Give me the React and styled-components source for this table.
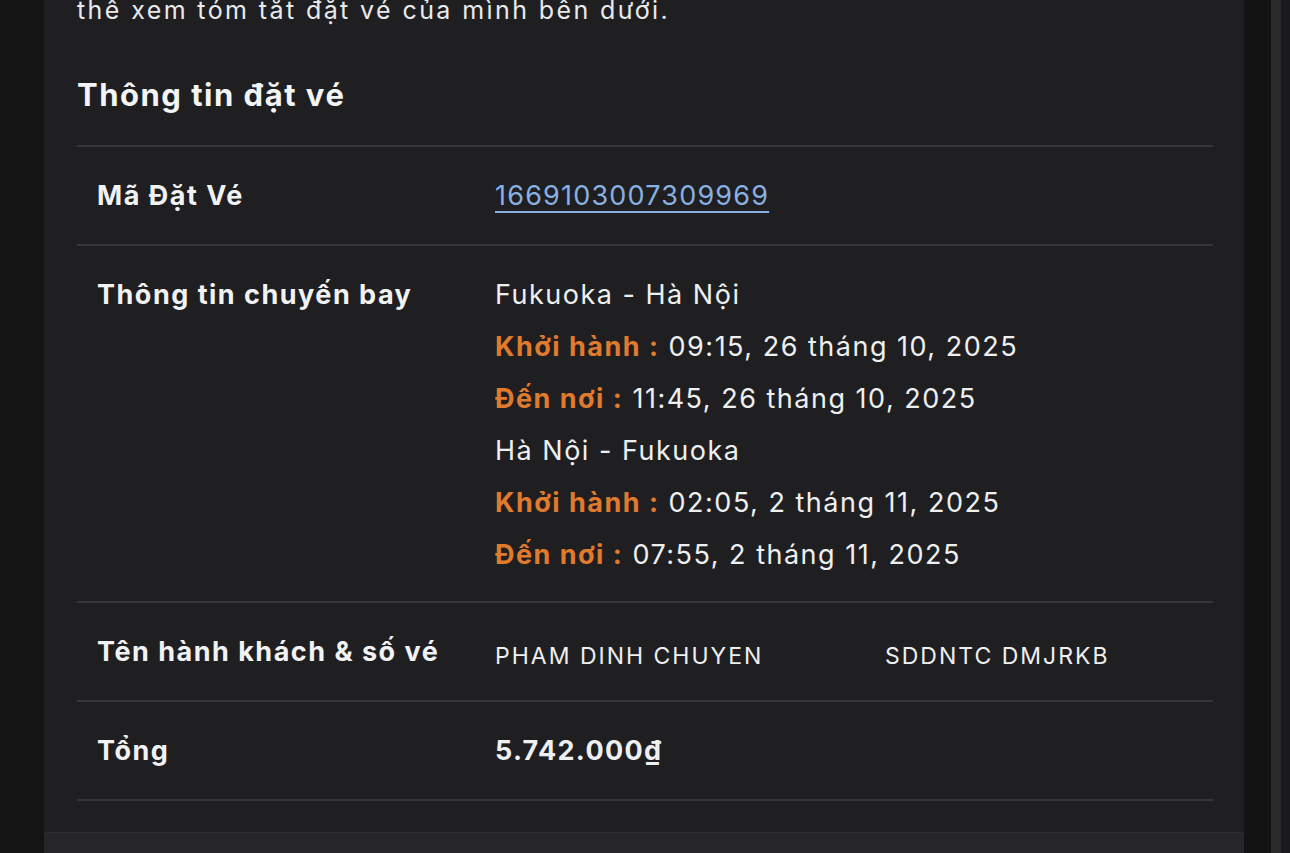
import React from "react";
import styled, { createGlobalStyle } from "styled-components";

const GlobalStyle = createGlobalStyle`
  html, body {
    margin: 0;
    padding: 0;
    background: #131313;
    height: 100%;
    overflow: hidden;
  }
  body {
    font-family: Inter, "Noto Sans", "Liberation Sans", sans-serif;
    color: #f1f2f4;
  }
`;

const Page = styled('div')`
  display: flex;
  height: 853px;
  overflow: hidden;
`;

const Gutter = styled('div')`
  flex: 0 0 ${p => p.w}px;
  background: ${p => p.bg || '#131313'};
`;

const Card = styled('div')`
  flex: 0 0 1200px;
  background: #1f1f22;
  display: flex;
  flex-direction: column;
`;

const Body = styled('div')`
  padding: 0 31px 0 33px;
  flex: 1;
`;

const Intro = styled('p')`
  margin: -5px 0 0;
  font-size: 25px;
  line-height: 30px;
  letter-spacing: 2.4px;
  color: #e9eaec;
`;

const Heading = styled('h2')`
  margin: 52px 0 0;
  font-size: 31px;
  line-height: 36px;
  font-weight: 700;
  letter-spacing: 1.5px;
  color: #f3f4f6;
`;

const Table = styled('div')`
  margin-top: 32px;
  border-bottom: 2px solid #34373b;
`;

const Row = styled('div')`
  display: grid;
  grid-template-columns: 398px 1fr;
  border-top: 2px solid #34373b;
  padding: 23px 0 ${p => (p.tight ? 20 : 22)}px;
`;

const Label = styled('div')`
  padding-left: 20px;
  font-size: 27px;
  line-height: 52px;
  font-weight: 700;
  letter-spacing: 1.5px;
  color: #f1f2f4;
`;

const Value = styled('div')`
  padding-left: 20px;
  font-size: 27px;
  line-height: 52px;
  letter-spacing: 1.5px;
  color: #eeeff1;
`;

const Line = styled('div')``;

const Code = styled('a')`
  color: #88b0e2;
  letter-spacing: 1.2px;
  text-decoration: underline;
  text-underline-offset: 6px;
  text-decoration-thickness: 2px;
`;

const Tag = styled('span')`
  color: #e07a2c;
  font-weight: 700;
`;

const Passenger = styled('div')`
  display: grid;
  grid-template-columns: 390px 1fr;
  font-size: 23px;
  letter-spacing: 2px;
  line-height: 52px;
  margin: 4px 0 -4px;
`;

const Total = styled('span')`
  font-weight: 700;
  letter-spacing: 1.3px;
`;

const Footer = styled('div')`
  height: 20px;
  background: #262628;
  border-top: 1px solid #2c2c2e;
`;

const flights = [
  { route: "Fukuoka - Hà Nội", dep: "09:15, 26 tháng 10, 2025", arr: "11:45, 26 tháng 10, 2025" },
  { route: "Hà Nội - Fukuoka", dep: "02:05, 2 tháng 11, 2025", arr: "07:55, 2 tháng 11, 2025" },
];

export default function App() {
  return (
    <Page>
      <GlobalStyle />
      <Gutter w={44} bg="#141414" />
      <Card>
        <Body>
          <Intro>thể xem tóm tắt đặt vé của mình bên dưới.</Intro>
          <Heading>Thông tin đặt vé</Heading>
          <Table>
            <Row>
              <Label>Mã Đặt Vé</Label>
              <Value><Code href="#">1669103007309969</Code></Value>
            </Row>
            <Row tight>
              <Label>Thông tin chuyến bay</Label>
              <Value>
                {flights.map(f => (
                  <React.Fragment key={f.route}>
                    <Line>{f.route}</Line>
                    <Line><Tag>Khởi hành :</Tag> {f.dep}</Line>
                    <Line><Tag>Đến nơi :</Tag> {f.arr}</Line>
                  </React.Fragment>
                ))}
              </Value>
            </Row>
            <Row>
              <Label>Tên hành khách &amp; số vé</Label>
              <Value>
                <Passenger>
                  <span>PHAM DINH CHUYEN</span>
                  <span>SDDNTC DMJRKB</span>
                </Passenger>
              </Value>
            </Row>
            <Row>
              <Label>Tổng</Label>
              <Value><Total>5.742.000₫</Total></Value>
            </Row>
          </Table>
        </Body>
        <Footer />
      </Card>
      <Gutter w={27} />
      <Gutter w={10} bg="#2b2b2b" />
      <Gutter w={9} bg="#1a1a1e" />
    </Page>
  );
}
